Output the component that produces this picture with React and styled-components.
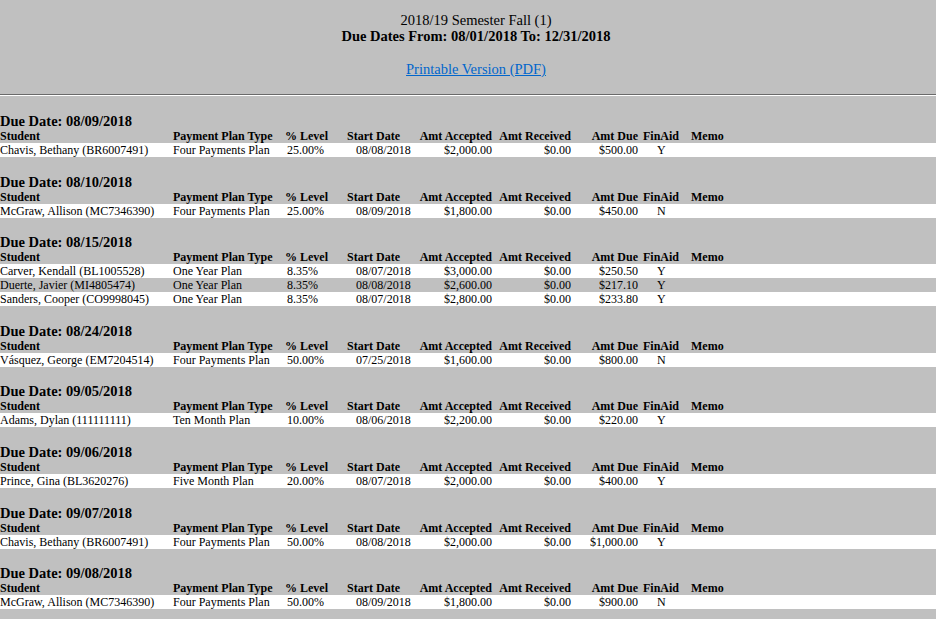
import React from 'react';
import styled, { createGlobalStyle } from 'styled-components';

const GlobalStyle = createGlobalStyle`
  html, body {
    margin: 0;
    padding: 0;
    background: #c0c0c0;
    color: #000;
    font-family: 'Liberation Serif', 'Times New Roman', serif;
  }
`;

const columns = [
  { key: 'student', label: 'Student', width: 173 },
  { key: 'plan', label: 'Payment Plan Type', width: 112 },
  { key: 'level', label: '% Level', width: 62, dataPad: 2 },
  { key: 'start', label: 'Start Date', width: 65, dataPad: 9 },
  { key: 'accepted', label: 'Amt Accepted', width: 80, align: 'right' },
  { key: 'received', label: 'Amt Received', width: 79, align: 'right' },
  { key: 'due', label: 'Amt Due', width: 67, align: 'right' },
  { key: 'finaid', label: 'FinAid', width: 53, headPad: 5, dataPad: 19 },
  { key: 'memo', label: 'Memo' },
];

const sections = [
  {
    date: '08/09/2018',
    rows: [['Chavis, Bethany (BR6007491)', 'Four Payments Plan', '25.00%', '08/08/2018', '$2,000.00', '$0.00', '$500.00', 'Y', '']],
  },
  {
    date: '08/10/2018',
    rows: [['McGraw, Allison (MC7346390)', 'Four Payments Plan', '25.00%', '08/09/2018', '$1,800.00', '$0.00', '$450.00', 'N', '']],
  },
  {
    date: '08/15/2018',
    rows: [
      ['Carver, Kendall (BL1005528)', 'One Year Plan', '8.35%', '08/07/2018', '$3,000.00', '$0.00', '$250.50', 'Y', ''],
      ['Duerte, Javier (MI4805474)', 'One Year Plan', '8.35%', '08/08/2018', '$2,600.00', '$0.00', '$217.10', 'Y', ''],
      ['Sanders, Cooper (CO9998045)', 'One Year Plan', '8.35%', '08/07/2018', '$2,800.00', '$0.00', '$233.80', 'Y', ''],
    ],
  },
  {
    date: '08/24/2018',
    rows: [['Vásquez, George (EM7204514)', 'Four Payments Plan', '50.00%', '07/25/2018', '$1,600.00', '$0.00', '$800.00', 'N', '']],
  },
  {
    date: '09/05/2018',
    rows: [['Adams, Dylan (111111111)', 'Ten Month Plan', '10.00%', '08/06/2018', '$2,200.00', '$0.00', '$220.00', 'Y', '']],
  },
  {
    date: '09/06/2018',
    rows: [['Prince, Gina (BL3620276)', 'Five Month Plan', '20.00%', '08/07/2018', '$2,000.00', '$0.00', '$400.00', 'Y', '']],
  },
  {
    date: '09/07/2018',
    rows: [['Chavis, Bethany (BR6007491)', 'Four Payments Plan', '50.00%', '08/08/2018', '$2,000.00', '$0.00', '$1,000.00', 'Y', '']],
  },
  {
    date: '09/08/2018',
    rows: [['McGraw, Allison (MC7346390)', 'Four Payments Plan', '50.00%', '08/09/2018', '$1,800.00', '$0.00', '$900.00', 'N', '']],
  },
];

const template = columns.map((c) => (c.width ? `${c.width}px` : '1fr')).join(' ');

const App = () => {
  return (
    <>
      <GlobalStyle />
      <Header>
        <Title>2018/19 Semester Fall (1)</Title>
        <Range>Due Dates From: 08/01/2018 To: 12/31/2018</Range>
        <PdfLink href='#'>Printable Version (PDF)</PdfLink>
      </Header>
      <Rule />
      {sections.map((s) => (
        <Section key={s.date}>
          <DueHeading>Due Date: {s.date}</DueHeading>
          <HeadRow>
            {columns.map((c) => (
              <Cell key={c.key} $align={c.align} $pad={c.headPad}>
                {c.label}
              </Cell>
            ))}
          </HeadRow>
          {s.rows.map((r, i) => (
            <DataRow key={i} $striped={i % 2 === 1}>
              {r.map((v, j) => (
                <Cell key={j} $align={columns[j].align} $pad={columns[j].dataPad}>
                  {v}
                </Cell>
              ))}
            </DataRow>
          ))}
        </Section>
      ))}
    </>
  );
};

export default App;

const Header = styled.div`
  display: flex;
  flex-direction: column;
  align-items: center;
  padding: 12px 0 0 16px;
  font-size: 14.5px;
  line-height: 16px;
`;

const Title = styled.div``;

const Range = styled.div`
  font-weight: bold;
`;

const PdfLink = styled.a`
  margin-top: 17px;
  color: #0066cc;
  text-decoration: underline;
`;

const Rule = styled.div`
  margin: 17px 0 16px;
  border-top: 1px solid #6a6a6a;
  border-bottom: 1px solid #ffffff;
`;

const Section = styled.section`
  margin-bottom: 15.6px;
`;

const DueHeading = styled.div`
  padding-top: 1px;
  font-size: 14.5px;
  font-weight: bold;
  line-height: 16px;
`;

const Row = styled.div`
  display: grid;
  grid-template-columns: ${template};
  font-size: 12px;
  white-space: nowrap;
`;

const HeadRow = styled(Row)`
  height: 14px;
  line-height: 14px;
  font-weight: bold;
`;

const DataRow = styled(Row)`
  height: 14px;
  line-height: 14px;
  background: ${(p) => (p.$striped ? '#c0c0c0' : '#ffffff')};
`;

const Cell = styled.div`
  text-align: ${(p) => p.$align || 'left'};
  padding-left: ${(p) => p.$pad || 0}px;
`;
